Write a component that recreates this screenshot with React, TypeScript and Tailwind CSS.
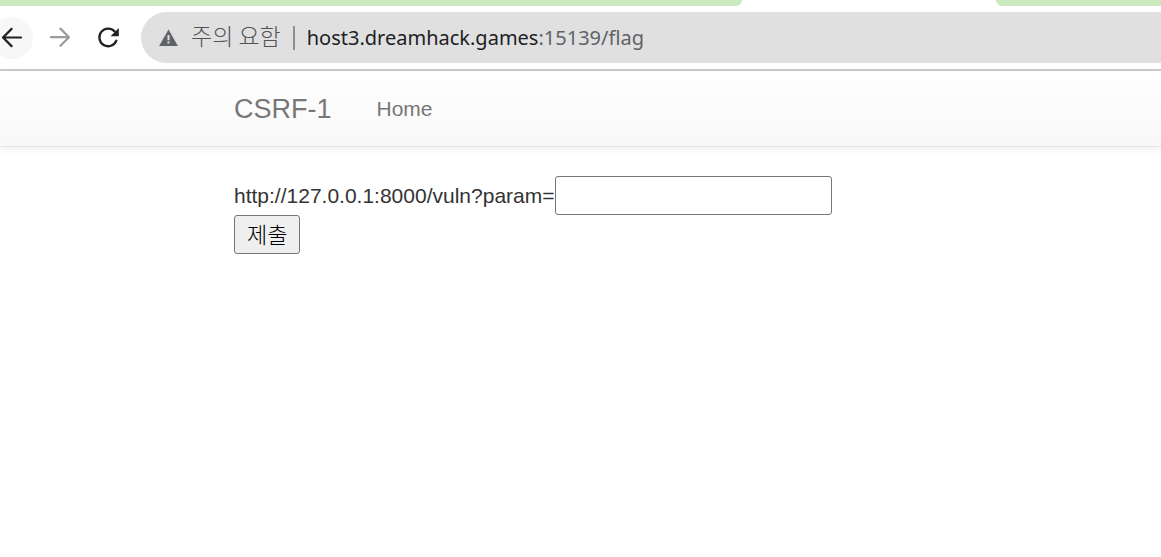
function BackIcon() {
  return (
    <svg viewBox="0 0 24 24" className="size-6" fill="none" stroke="#202124" strokeWidth="2.2" strokeLinecap="round" strokeLinejoin="round" aria-hidden="true">
      <path d="M21 11.5H3.4M11.6 2.9 3 11.5l8.6 8.6" />
    </svg>
  );
}

function ForwardIcon() {
  return (
    <svg viewBox="0 0 24 24" className="size-6" fill="none" stroke="#9b9b9b" strokeWidth="2.2" strokeLinecap="round" strokeLinejoin="round" aria-hidden="true">
      <path d="M3 11.2h17.6M12.4 2.6 21 11.2l-8.6 8.6" />
    </svg>
  );
}

function ReloadIcon() {
  return (
    <svg viewBox="0 0 24 24" className="size-6" aria-hidden="true">
      <path d="M18.6 5.4A8.8 8.8 0 1 0 20.3 14.8" fill="none" stroke="#202124" strokeWidth="2.3" strokeLinecap="round" />
      <path d="M22.8 2v8.2h-8.2z" fill="#202124" />
    </svg>
  );
}

function WarningIcon() {
  return (
    <svg viewBox="0 0 20 18" className="h-[18px] w-5" aria-hidden="true">
      <path d="M9.5.6 18.9 17H.1z" fill="#5f6368" />
      <path d="M8.5 6h2v5.2h-2zM8.5 12.6h2v2h-2z" fill="#e0e0e0" />
    </svg>
  );
}

export default function App() {
  return (
    <div className="min-h-screen overflow-hidden bg-white font-['Liberation_Sans','Noto_Sans_CJK_KR',sans-serif] text-[21px] leading-[30px] text-[#333333]">
      <header className="border-b-2 border-[#cccccc]">
        <div className="flex h-1.5 justify-between">
          <div className="w-[742px] rounded-br-lg bg-[#cae9be]" />
          <div className="ml-[254px] flex-1 rounded-bl-lg bg-[#cae9be]" />
        </div>
        <div className="flex items-center py-1.5">
          <div className="-ml-[9px] flex items-center gap-1.5">
            <button type="button" aria-label="Back" className="flex size-[42px] items-center justify-center rounded-full bg-[#f7f7f7]">
              <BackIcon />
            </button>
            <button type="button" aria-label="Forward" className="flex size-[42px] items-center justify-center rounded-full">
              <ForwardIcon />
            </button>
            <button type="button" aria-label="Reload" className="flex size-[42px] items-center justify-center rounded-full">
              <ReloadIcon />
            </button>
          </div>
          <div className="ml-3 flex h-[51px] flex-1 items-center rounded-l-full bg-[#e0e0e0] pl-[18px] font-['Noto_Sans','Noto_Sans_CJK_KR',sans-serif] text-xl whitespace-nowrap text-[#5f6368]">
            <WarningIcon />
            <span className="ml-3 pb-1 font-['Noto_Sans_CJK_KR',sans-serif] text-[23px] font-light text-[#50545a]">주의 요함</span>
            <span className="ml-3 h-6 w-0.5 bg-[#8e8e8e]" />
            <span className="ml-3">
              <span className="text-[#202124]">host3.dreamhack.games</span>:15139/flag
            </span>
          </div>
        </div>
      </header>

      <nav className="flex h-[76px] items-center border-b border-[#e5e5e5] bg-linear-to-b from-white to-[#f8f8f8] px-[234px] text-[#777777] shadow-[0_2px_8px_rgba(0,0,0,0.07)]">
        <a href="#top" className="text-[27px]">CSRF-1</a>
        <a href="#home" className="ml-[45px]">Home</a>
      </nav>

      <main className="px-[234px] pt-[29px]">
        <form onSubmit={(event) => event.preventDefault()}>
          <div className="flex items-center whitespace-nowrap">
            <label htmlFor="param">http://127.0.0.1:8000/vuln?param=</label>
            <input id="param" name="param" type="text" className="h-[39px] w-[277px] rounded-[3px] border border-[#767676] bg-white px-1" />
          </div>
          <button type="submit" className="flex h-[39px] items-center rounded-[3px] border border-[#767676] bg-[#efefef] px-3 pb-1 font-['Noto_Sans_CJK_KR',sans-serif] text-[22px] font-light text-black">
            제출
          </button>
        </form>
      </main>
    </div>
  );
}
